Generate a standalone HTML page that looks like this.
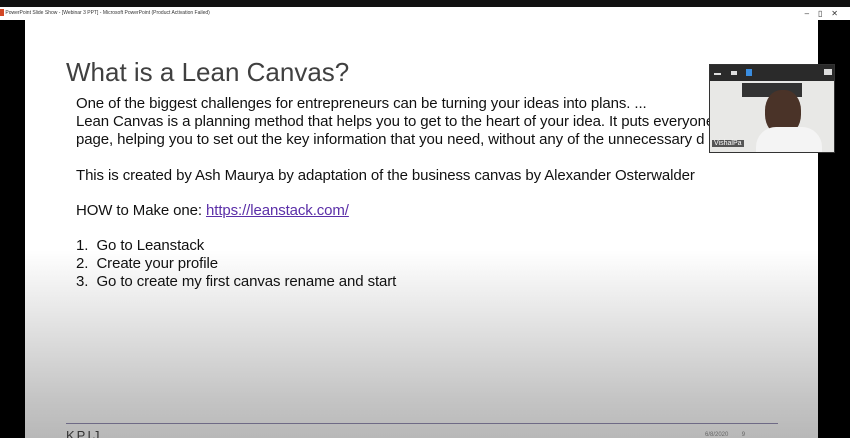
<!DOCTYPE html>
<html><head><style>
body{margin:0;width:850px;height:438px;overflow:hidden;background:#000;font-family:"Liberation Sans",sans-serif;position:relative}
.top{position:absolute;left:0;top:0;width:850px;height:7px;background:#111}
.tb{position:absolute;left:0;top:7px;width:850px;height:13px;background:#fff;font-size:5px;color:#333;line-height:13px}
.slide{position:absolute;left:25px;top:20px;width:793px;height:418px;background:linear-gradient(#fff 0,#fff 230px,#e4e4e4 300px,#c4c4c4 380px,#b8b8b8 418px);overflow:hidden}
.t{position:absolute;left:41px;top:37px;font-size:26px;color:#404040;white-space:nowrap}
.b{position:absolute;left:51px;font-size:15px;letter-spacing:-0.1px;color:#111;white-space:nowrap}
a{color:#5b2fa8;text-decoration:underline}
.line{position:absolute;left:41px;top:403px;width:712px;height:1px;background:#6e6a86}
</style></head><body>
<div class="top"></div>
<div class="tb"><span style="display:inline-block;width:4px;height:7px;background:#d24726;vertical-align:middle"></span> PowerPoint Slide Show - [Webinar 3 PPT] - Microsoft PowerPoint (Product Activation Failed)<span style="position:absolute;right:12px;font-size:8px">–&nbsp;&nbsp;&nbsp;&nbsp;▯&nbsp;&nbsp;&nbsp;&nbsp;✕</span></div>
<div class="slide">
<div class="t">What is a Lean Canvas?</div>
<div class="b" style="top:75px">One of the biggest challenges for entrepreneurs can be turning your ideas into plans. ...</div>
<div class="b" style="top:93px">Lean Canvas is a planning method that helps you to get to the heart of your idea. It puts everyone</div>
<div class="b" style="top:111px">page, helping you to set out the key information that you need, without any of the unnecessary d</div>
<div class="b" style="top:147px">This is created by Ash Maurya by adaptation of the business canvas by Alexander Osterwalder</div>
<div class="b" style="top:182px">HOW to Make one: <a>https://leanstack.com/</a></div>
<div class="b" style="top:217px">1.&nbsp; Go to Leanstack</div>
<div class="b" style="top:235px">2.&nbsp; Create your profile</div>
<div class="b" style="top:253px">3.&nbsp; Go to create my first canvas rename and start</div>
<div class="line"></div>
<div style="position:absolute;left:41px;top:408px;font-size:13px;color:#333;letter-spacing:2px">KPIJ</div>
<div style="position:absolute;left:680px;top:412px;font-size:6px;color:#666">6/8/2020&nbsp;&nbsp;&nbsp;&nbsp;&nbsp;&nbsp;&nbsp;&nbsp;9</div>
</div>
<div style="position:absolute;left:709px;top:64px;width:126px;height:89px;background:#e8e8e6;border:1px solid #333;box-sizing:border-box;overflow:hidden">
<div style="height:16px;background:#2a2a2a"></div>
<div style="position:absolute;left:4px;top:8px;width:7px;height:2px;background:#ddd"></div>
<div style="position:absolute;left:21px;top:6px;width:6px;height:4px;background:#ddd"></div>
<div style="position:absolute;left:36px;top:4px;width:6px;height:7px;background:#3a8de0"></div>
<div style="position:absolute;left:114px;top:4px;width:8px;height:6px;background:#ddd"></div>
<div style="position:absolute;left:32px;top:18px;width:60px;height:14px;background:#333"></div>
<div style="position:absolute;left:55px;top:25px;width:36px;height:45px;border-radius:45%;background:#4a3328"></div>
<div style="position:absolute;left:46px;top:62px;width:66px;height:30px;border-radius:20px 20px 0 0;background:#f4f4f4"></div>
<div style="position:absolute;left:2px;top:75px;font-size:7px;color:#fff;background:#555;padding:0 2px">VishalPa</div>
</div>
</body></html>
